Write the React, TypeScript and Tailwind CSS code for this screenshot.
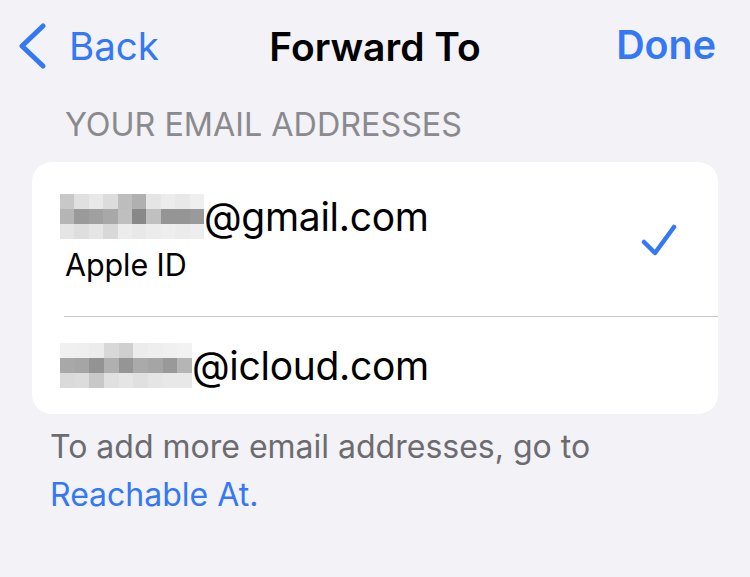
import React from "react";

const gmailCells: string[][] = [
  ["#c8c8c8", "#e0e0e0", "#e8e8e8", "#dcdcdc", "#bdbdbd", "#b0b0b0", "#e5e5e5", "#ececec", "#e8e8e8", "#efefef"],
  ["#b5b5b5", "#9a9a9a", "#a0a0a0", "#a8a8a8", "#bfbfbf", "#888888", "#c0c0c0", "#959595", "#959595", "#9a9a9a"],
  ["#e5e5e5", "#dedede", "#e5e5e5", "#d8d8d8", "#ececec", "#e8e8e8", "#ececec", "#eeeeee", "#ebebeb", "#eeeeee"],
];

const icloudCells: string[][] = [
  ["#f0f0f0", "#efefef", "#ececec", "#d8d8d8", "#cfcfcf", "#ececec", "#eeeeee", "#f0f0f0", "#f2f2f2"],
  ["#a8a8a8", "#a5a5a5", "#939393", "#b0b0b0", "#959595", "#aaaaaa", "#a5a5a5", "#999999", "#b5b5b5"],
  ["#dadada", "#dcdcdc", "#c8c8c8", "#e0e0e0", "#e5e5e5", "#e0e0e0", "#e5e5e5", "#e8e8e8", "#e8e8e8"],
];

function Pixelated({ cells, width }: { cells: string[][]; width: number }) {
  return (
    <div className="flex flex-col shrink-0" style={{ width }}>
      {cells.map((row, i) => (
        <div key={i} className="flex h-[15px]">
          {row.map((c, j) => (
            <div key={j} className="flex-1 h-full" style={{ backgroundColor: c }} />
          ))}
        </div>
      ))}
    </div>
  );
}

export default function App() {
  return (
    <div
      className="w-[750px] h-[577px] bg-[#f2f2f7] overflow-hidden"
      style={{ fontFamily: "Inter, 'Noto Sans', sans-serif" }}
    >
      {/* Nav bar */}
      <div className="relative flex items-center justify-between h-[92px] pl-[18px] pr-[34px]">
        <div className="flex items-center text-[#3478f6]">
          <svg width="30" height="46" viewBox="0 0 30 46" className="mr-[21px]">
            <path
              d="M25 3 L4 23 L25 43"
              fill="none"
              stroke="#3478f6"
              strokeWidth="5"
              strokeLinecap="round"
              strokeLinejoin="round"
            />
          </svg>
          <span className="text-[38.5px] leading-none">Back</span>
        </div>
        <span className="absolute left-1/2 -translate-x-1/2 text-[39px] font-semibold leading-none text-black">
          Forward To
        </span>
        <span className="text-[39.4px] font-semibold leading-none text-[#3478f6]">Done</span>
      </div>

      {/* Section header */}
      <div className="pl-[65px] pt-[17px] h-[70px]">
        <span className="text-[32.3px] leading-none text-[#8a8a8e]">YOUR EMAIL ADDRESSES</span>
      </div>

      {/* Card */}
      <div className="mx-[32px] bg-white rounded-[20px] overflow-hidden">
        <div className="flex items-center pl-[28px] pr-[40px] h-[155px] relative">
          <div className="flex-1 flex flex-col pb-[8px]">
            <div className="flex items-center h-[52px]">
              <Pixelated cells={gmailCells} width={144} />
              <span className="text-[39px] leading-none text-black tracking-[-0.3px]">@gmail.com</span>
            </div>
            <div className="mt-[8px] pl-[5px] text-[30.5px] leading-none text-black tracking-[-0.1px]">
              Apple ID
            </div>
          </div>
          <svg width="40" height="40" viewBox="0 0 40 40">
            <path
              d="M6 22 L17 33 L36 7"
              fill="none"
              stroke="#3478f6"
              strokeWidth="4.5"
              strokeLinecap="round"
              strokeLinejoin="round"
            />
          </svg>
          <div className="absolute left-[32px] right-0 bottom-0 h-px bg-[#c8c8cc]" />
        </div>
        <div className="flex items-center pl-[28px] h-[97px]">
          <Pixelated cells={icloudCells} width={132} />
          <span className="text-[39px] leading-none text-black tracking-[-0.3px]">@icloud.com</span>
        </div>
      </div>

      {/* Footer */}
      <div className="pl-[50px] pt-[9px] text-[32px] leading-[48px]">
        <div className="text-[#6c6c70]">To add more email addresses, go to</div>
        <div className="text-[#3478f6]">Reachable At.</div>
      </div>
    </div>
  );
}
